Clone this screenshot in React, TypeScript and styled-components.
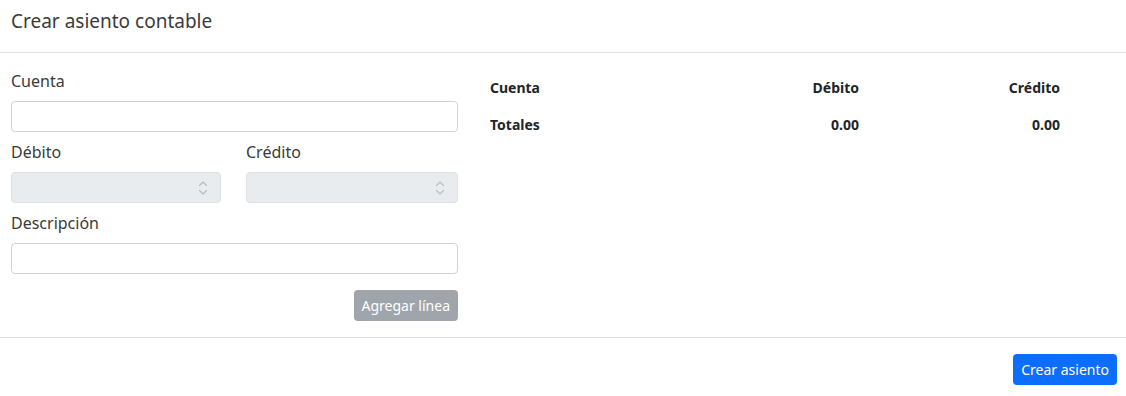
import React from 'react';
import styled, { createGlobalStyle } from 'styled-components';

const GlobalStyle = createGlobalStyle`
  html, body {
    margin: 0;
    padding: 0;
    background: #fff;
  }

  body {
    font-family: 'Noto Sans', 'Open Sans', sans-serif;
    color: #212529;
  }

  * {
    box-sizing: border-box;
  }
`;

const Panel = styled.div`
  width: 1126px;
  min-height: 396px;
  display: flex;
  flex-direction: column;
`;

const Header = styled.div`
  height: 53px;
  padding: 10px 11px 0;
  border-bottom: 1px solid #dee2e6;
`;

const Title = styled.h5`
  margin: 0;
  font-size: 19px;
  font-weight: 400;
  line-height: 1.2;
  color: #3b3b3b;
`;

const Body = styled.div`
  display: grid;
  grid-template-columns: 447px 1fr;
  column-gap: 24px;
  padding: 16px 9px 16px 11px;
  border-bottom: 1px solid #dee2e6;
`;

const Form = styled.div`
  display: flex;
  flex-direction: column;
`;

const Row = styled.div`
  display: grid;
  grid-template-columns: 210px 212px;
  column-gap: 25px;
`;

const Group = styled.div`
  margin-bottom: 8px;
`;

const Label = styled.label`
  display: block;
  margin-bottom: 8px;
  font-size: 16px;
  line-height: 24px;
  color: #3a3a3a;
`;

const Input = styled.input`
  display: block;
  width: 100%;
  height: 31px;
  padding: 4px 8px;
  font-family: inherit;
  font-size: 14px;
  border: 1px solid #ced4da;
  border-radius: 4px;
  background: #fff;
  outline: none;
`;

const SelectWrap = styled.div`
  position: relative;
`;

const Select = styled.select`
  display: block;
  width: 100%;
  height: 31px;
  padding: 4px 30px 4px 8px;
  font-family: inherit;
  font-size: 14px;
  border: 1px solid #dee2e6;
  border-radius: 4px;
  background: #e9ecef;
  appearance: none;
  -webkit-appearance: none;
  color: #212529;
  opacity: 1;
`;

const Chevrons = styled.svg`
  position: absolute;
  right: 13px;
  top: 50%;
  margin-top: -8px;
  pointer-events: none;
`;

const Actions = styled.div`
  display: flex;
  justify-content: flex-end;
  margin-top: 8px;
`;

const Button = styled.button<{ $variant: 'primary' | 'muted' }>`
  height: 31px;
  padding: 0 7px;
  font-family: inherit;
  font-size: 14px;
  line-height: 1.5;
  color: #fff;
  border: 1px solid transparent;
  border-radius: 4px;
  background: ${(p) => (p.$variant === 'primary' ? '#0d6efd' : '#9fa5aa')};
  cursor: ${(p) => (p.$variant === 'primary' ? 'pointer' : 'default')};
`;

const Table = styled.table`
  width: 100%;
  border-collapse: collapse;
  align-self: start;

  th, td {
    padding: 8px;
    font-size: 14px;
    line-height: 21px;
    font-weight: 700;
    color: #212529;
  }
`;

const Cell = styled.th<{ $align?: 'left' | 'right' }>`
  text-align: ${(p) => p.$align || 'left'};
`;

const Footer = styled.div`
  display: flex;
  justify-content: flex-end;
  padding: 16px 9px 11px;
`;

function ChevronIcon (): React.ReactElement {
  return (
    <Chevrons width='10' height='16' viewBox='0 0 10 16' fill='none'>
      <polyline points='1.5,5.5 5,2 8.5,5.5' stroke='#b4bac0' strokeWidth='1.1' strokeLinecap='round' strokeLinejoin='round' />
      <polyline points='1.5,10.5 5,14 8.5,10.5' stroke='#b4bac0' strokeWidth='1.1' strokeLinecap='round' strokeLinejoin='round' />
    </Chevrons>
  );
}

function AmountSelect (): React.ReactElement {
  return (
    <SelectWrap>
      <Select disabled defaultValue=''>
        <option value='' />
      </Select>
      <ChevronIcon />
    </SelectWrap>
  );
}

export default function App (): React.ReactElement {
  return (
    <>
      <GlobalStyle />
      <Panel>
        <Header>
          <Title>Crear asiento contable</Title>
        </Header>
        <Body>
          <Form>
            <Group>
              <Label>Cuenta</Label>
              <Input type='text' />
            </Group>
            <Row>
              <Group>
                <Label>Débito</Label>
                <AmountSelect />
              </Group>
              <Group>
                <Label>Crédito</Label>
                <AmountSelect />
              </Group>
            </Row>
            <Group>
              <Label>Descripción</Label>
              <Input type='text' />
            </Group>
            <Actions>
              <Button $variant='muted' disabled>Agregar línea</Button>
            </Actions>
          </Form>
          <Table>
            <colgroup>
              <col />
              <col style={{ width: 200 }} />
              <col style={{ width: 201 }} />
              <col style={{ width: 49 }} />
            </colgroup>
            <thead>
              <tr>
                <Cell>Cuenta</Cell>
                <Cell $align='right'>Débito</Cell>
                <Cell $align='right'>Crédito</Cell>
                <Cell />
              </tr>
            </thead>
            <tfoot>
              <tr>
                <Cell>Totales</Cell>
                <Cell $align='right'>0.00</Cell>
                <Cell $align='right'>0.00</Cell>
                <Cell />
              </tr>
            </tfoot>
          </Table>
        </Body>
        <Footer>
          <Button $variant='primary'>Crear asiento</Button>
        </Footer>
      </Panel>
    </>
  );
}
